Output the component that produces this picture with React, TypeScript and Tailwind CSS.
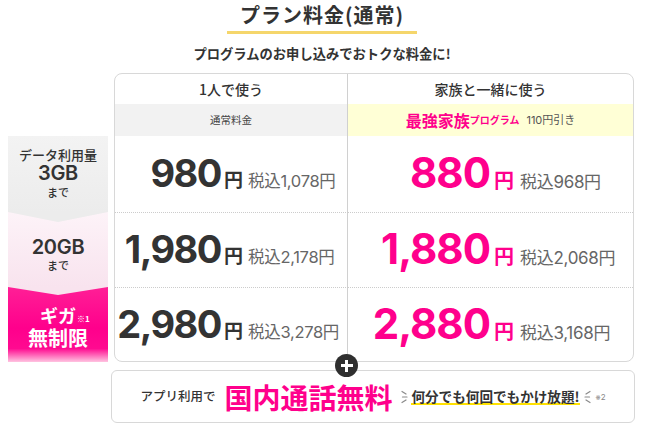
import React from "react";

const PINK = "text-[#ff008c]";

function Mark({ flip }: { flip?: boolean }) {
  return (
    <svg width="7" height="14" viewBox="0 0 7 14" className={flip ? "-scale-x-100" : ""}>
      <g stroke="#8a8a8a" strokeWidth="1.2" strokeLinecap="round" fill="none">
        <line x1="1" y1="1.5" x2="5" y2="4" />
        <line x1="1.5" y1="7" x2="6" y2="7" />
        <line x1="1" y1="12.5" x2="5" y2="10" />
      </g>
    </svg>
  );
}

function DarkPrice({ num, tax }: { num: string; tax: string }) {
  return (
    <div className="h-full flex items-center">
      <div className="flex items-baseline">
        <div className="w-[128px] flex justify-end items-baseline">
          <span className="font-['Inter',sans-serif] font-bold text-[38px] leading-none tracking-[-1.5px] text-[#333]">{num}</span>
          <span className="ml-[3px] font-bold text-[19px] text-[#333]">円</span>
        </div>
        <span className="ml-[5px] text-[16.5px] text-[#666] font-['Inter','Noto_Sans_CJK_JP',sans-serif] tracking-[-0.3px]">税込{tax}円</span>
      </div>
    </div>
  );
}

function PinkPrice({ num, tax }: { num: string; tax: string }) {
  return (
    <div className="h-full flex items-center">
      <div className="flex items-baseline">
        <div className="w-[166px] flex justify-end items-baseline">
          <span className="font-['Inter',sans-serif] font-bold text-[42px] leading-none tracking-[-1px] text-[#ff008c]">{num}</span>
          <span className="ml-[4px] font-bold text-[20px] text-[#ff008c]">円</span>
        </div>
        <span className="ml-[6px] text-[17px] text-[#666] font-['Inter','Noto_Sans_CJK_JP',sans-serif] tracking-[-0.3px]">税込{tax}円</span>
      </div>
    </div>
  );
}

function LeftCol() {
  return (
    <div className="ml-[8px] mt-[63px] w-[100px] flex flex-col text-[#333]">
      <div className="relative h-[76px] bg-[linear-gradient(180deg,#f3f3f3,#ececec)] flex flex-col items-center pt-[10px]">
        <div className="text-[13px] leading-[17px] font-medium">データ利用量</div>
        <div className="font-['Inter',sans-serif] font-semibold text-[20px] leading-[21px] tracking-[-0.3px]">3GB</div>
        <div className="mt-[2px] text-[11px] leading-[13px] font-medium">まで</div>
        <div className="absolute left-0 top-full w-full h-[10px] bg-[#ececec] [clip-path:polygon(0_0,100%_0,50%_100%)] z-10" />
      </div>
      <div className="relative h-[75px] bg-[linear-gradient(180deg,#fdf3f8,#f8e3ee)] flex flex-col items-center pt-[25px]">
        <div className="font-['Inter',sans-serif] font-semibold text-[20px] leading-[21px] tracking-[-0.3px]">20GB</div>
        <div className="mt-[1px] text-[11px] leading-[13px] font-medium">まで</div>
        <div className="absolute left-0 top-full w-full h-[8px] bg-[#f8e3ee] [clip-path:polygon(0_0,100%_0,50%_100%)] z-10" />
      </div>
      <div className="h-[75px] bg-[linear-gradient(180deg,#ff1f96_0%,#ff008c_55%,#ff0a90_82%,#ffc4e1_100%)] flex flex-col items-center pt-[17px] text-white">
        <div className="relative text-[18px] leading-[22px] font-bold">
          ギガ
          <span className="absolute left-full top-[10px] ml-[1px] text-[8px] leading-[10px] font-bold">※1</span>
        </div>
        <div className="text-[20px] leading-[24px] font-bold">無制限</div>
      </div>
    </div>
  );
}

function Card() {
  return (
    <div className="ml-[6px] w-[520px] border border-[#d8d8d8] rounded-[8px] overflow-hidden grid grid-cols-[233px_1fr]">
      <div className="h-[30px] border-r border-[#d0d0d0] flex items-center justify-center text-[14px] font-medium">1人で使う</div>
      <div className="h-[30px] flex items-center justify-center text-[14px] font-medium">家族と一緒に使う</div>
      <div className="h-[32px] border-r border-[#d0d0d0] bg-[#f2f2f2] flex items-center justify-center text-[10.5px] text-[#444]">通常料金</div>
      <div className="h-[32px] bg-[#ffffd6] flex items-center justify-center">
        <span className={`text-[16px] font-bold ${PINK} leading-none`}>最強家族</span>
        <span className={`text-[10px] font-bold ${PINK} leading-none`}>プログラム</span>
        <span className="ml-[7px] text-[11px] text-[#555] leading-none font-['Inter','Noto_Sans_CJK_JP',sans-serif]">110円引き</span>
      </div>
      <div className="h-[76px] border-r border-[#d0d0d0]">
        <DarkPrice num="980" tax="1,078" />
      </div>
      <div className="h-[76px]">
        <PinkPrice num="880" tax="968" />
      </div>
      <div className="h-[75px] border-r border-[#d0d0d0] border-t border-t-[#cccccc] [border-top-style:dotted]">
        <DarkPrice num="1,980" tax="2,178" />
      </div>
      <div className="h-[75px] border-t border-t-[#cccccc] [border-top-style:dotted]">
        <PinkPrice num="1,880" tax="2,068" />
      </div>
      <div className="h-[74px] border-r border-[#d0d0d0] border-t border-t-[#cccccc] [border-top-style:dotted]">
        <DarkPrice num="2,980" tax="3,278" />
      </div>
      <div className="h-[74px] border-t border-t-[#cccccc] [border-top-style:dotted]">
        <PinkPrice num="2,880" tax="3,168" />
      </div>
    </div>
  );
}

function BottomBox() {
  return (
    <div className="relative ml-[111px] mt-[8px] w-[524px] h-[53px] border border-[#d8d8d8] rounded-[6px] flex items-center justify-center">
      <div className="absolute left-[223px] top-[-17px] w-[23px] h-[23px] rounded-full bg-[#2f2f2f] flex items-center justify-center">
        <div className="relative w-[12px] h-[12px]">
          <div className="absolute left-0 top-[4.5px] w-[12px] h-[3px] bg-white" />
          <div className="absolute top-0 left-[4.5px] w-[3px] h-[12px] bg-white" />
        </div>
      </div>
      <span className="text-[12.5px] font-medium text-[#333]">アプリ利用で</span>
      <span className={`ml-[9px] text-[28px] font-bold ${PINK} leading-none`}>国内通話無料</span>
      <span className="ml-[9px] flex items-center"><Mark /></span>
      <span className="ml-[3px] text-[13.6px] leading-[14px] font-bold text-[#333] border-b-2 border-[#ffe100]">何分でも何回でもかけ放題!</span>
      <span className="ml-[4px] flex items-center"><Mark flip /></span>
      <span className="ml-[5px] text-[8px] text-[#888] font-['Inter','Noto_Sans_CJK_JP',sans-serif]">※2</span>
    </div>
  );
}

export default function App() {
  return (
    <div className="w-[650px] h-[432px] bg-white font-['Noto_Sans_CJK_JP',sans-serif] text-[#333] overflow-hidden">
      <div className="flex flex-col items-center pr-[6px]">
        <div className="mt-[2px] px-[13px] pb-[3px] border-b-[3px] border-[#f5d66b] text-[20px] leading-[26px] font-bold tracking-[1px]">プラン料金(通常)</div>
        <div className="mt-[10px] text-[13.3px] leading-[20px] font-bold">プログラムのお申し込みでおトクな料金に!</div>
      </div>
      <div className="mt-[9px] flex">
        <LeftCol />
        <Card />
      </div>
      <BottomBox />
    </div>
  );
}
